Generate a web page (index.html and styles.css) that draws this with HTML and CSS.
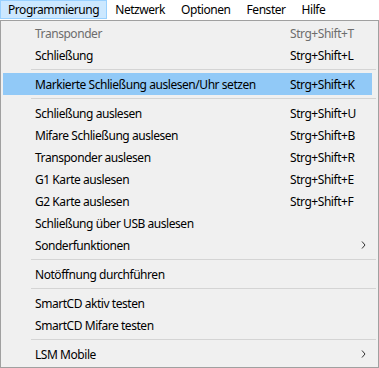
FILE: index.html
```html
<!DOCTYPE html>
<html lang="de">
<head>
    <meta charset="UTF-8">
    <title>Programmierung</title>
    <link rel="stylesheet" href="styles.css">
</head>
<body>
<div class="menubar">
    <span class="top-item open">Programmierung</span>
    <span class="top-item">Netzwerk</span>
    <span class="top-item">Optionen</span>
    <span class="top-item">Fenster</span>
    <span class="top-item">Hilfe</span>
</div>

<div class="dropdown">
    <div class="item disabled"><span class="label">Transponder</span><span class="key">Strg+Shift+T</span></div>
    <div class="item"><span class="label">Schließung</span><span class="key">Strg+Shift+L</span></div>
    <div class="sep"></div>
    <div class="item hover"><span class="label">Markierte Schließung auslesen/Uhr setzen</span><span class="key">Strg+Shift+K</span></div>
    <div class="sep"></div>
    <div class="item"><span class="label">Schließung auslesen</span><span class="key">Strg+Shift+U</span></div>
    <div class="item"><span class="label">Mifare Schließung auslesen</span><span class="key">Strg+Shift+B</span></div>
    <div class="item"><span class="label">Transponder auslesen</span><span class="key">Strg+Shift+R</span></div>
    <div class="item"><span class="label">G1 Karte auslesen</span><span class="key">Strg+Shift+E</span></div>
    <div class="item"><span class="label">G2 Karte auslesen</span><span class="key">Strg+Shift+F</span></div>
    <div class="item"><span class="label">Schließung über USB auslesen</span></div>
    <div class="item"><span class="label">Sonderfunktionen</span>
        <svg class="arrow" width="5" height="8" viewBox="0 0 5 8"><path d="M1 0.5 L4 4 L1 7.5" fill="none" stroke="#333" stroke-width="1"/></svg>
    </div>
    <div class="sep"></div>
    <div class="item"><span class="label">Notöffnung durchführen</span></div>
    <div class="sep"></div>
    <div class="item"><span class="label">SmartCD aktiv testen</span></div>
    <div class="item"><span class="label">SmartCD Mifare testen</span></div>
    <div class="sep"></div>
    <div class="item"><span class="label">LSM Mobile</span>
        <svg class="arrow" width="5" height="8" viewBox="0 0 5 8"><path d="M1 0.5 L4 4 L1 7.5" fill="none" stroke="#333" stroke-width="1"/></svg>
    </div>
</div>
</body>
</html>
```

FILE: styles.css
```css
*{
    margin: 0;
    padding: 0;
    box-sizing: border-box;
}
body{
    width: 379px;
    height: 368px;
    background-color: #fff;
    font-family: "Noto Sans", "Liberation Sans", sans-serif;
    font-size: 12px;
    letter-spacing: -0.45px;
    color: #000;
    overflow: hidden;
}
.menubar{
    display: flex;
    height: 20px;
    background-color: #fff;
}
.top-item{
    height: 19px;
    line-height: 17px;
    padding: 0 7px;
    border: 1px solid transparent;
}
.top-item.open{
    background-color: #cce8ff;
    border-color: #99d1ff;
}
.dropdown{
    width: 379px;
    height: 348px;
    padding: 1px 6px 2px 2px;
    background-color: #f0f0f0;
    border: 1px solid #a0a0a0;
}
.item{
    display: flex;
    align-items: center;
    height: 22px;
    padding-left: 32px;
}
.item .label{
    flex: 1;
}
.item .key{
    width: 82px;
}
.item.disabled{
    color: #6d6d6d;
}
.item.hover{
    background-color: #91c9f7;
}
.item .arrow{
    margin-right: 6px;
}
.sep{
    height: 1px;
    margin: 3px -4px 3px 28px;
    background-color: #d4d4d4;
}
```
